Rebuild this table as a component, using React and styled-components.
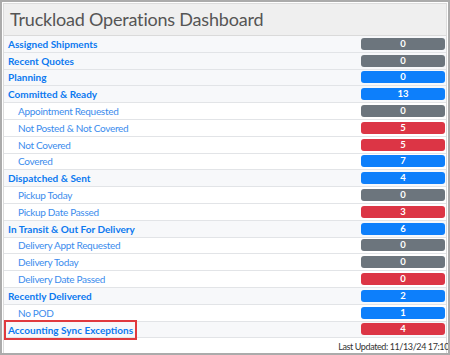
import React from "react";
import styled, { createGlobalStyle } from "styled-components";

const Global = createGlobalStyle`
  html, body { margin: 0; padding: 0; background: #fff; }
  body { font-family: Lato, "Open Sans", sans-serif; }
`;

const Frame = styled.div`
  width: 450px;
  height: 355px;
  box-sizing: border-box;
  border: 2px solid #ababab;
  background: #fff;
  display: flex;
  flex-direction: column;
  overflow: hidden;
`;

const Inner = styled.div`
  flex: 1;
  margin: 1px 1px 0 1px;
  border: 1px solid #dcdcdc;
  border-bottom: none;
  display: flex;
  flex-direction: column;
`;

const Header = styled.div`
  height: 32px;
  box-sizing: border-box;
  background: #efefef;
  border-bottom: 1px solid #dadada;
  display: flex;
  align-items: center;
  padding: 0 0 1px 6px;
  font-size: 18px;
  letter-spacing: -0.2px;
  color: #555;
`;

const List = styled.div`
  display: flex;
  flex-direction: column;
`;

const Row = styled.div`
  height: 16.8px;
  box-sizing: border-box;
  display: grid;
  grid-template-columns: 1fr 84px;
  align-items: center;
  padding: 0 1px 0 ${(p) => (p.$sub ? 14 : 4)}px;
  background: ${(p) => (p.$sub ? "#fff" : "#f7f8fa")};
  border-bottom: 1px solid #e2e4e7;
`;

const Label = styled.span`
  font-size: 10px;
  line-height: 14px;
  color: ${(p) => (p.$sub ? "#3b8ced" : "#0b79f0")};
  font-weight: ${(p) => (p.$sub ? 400 : 700)};
  letter-spacing: ${(p) => (p.$sub ? "-0.3px" : "0")};
  white-space: nowrap;
`;

const Highlight = styled.span`
  justify-self: start;
  border: 2px solid #e0393e;
  margin: -2px 0 -4px -4px;
  padding: 1px 2px 1px 2px;
  line-height: 12px;
`;

const colors = { grey: "#6c757d", blue: "#0d7ffb", red: "#dc3545" };

const Badge = styled.span`
  height: 12px;
  border-radius: 3px;
  background: ${(p) => colors[p.$tone]};
  color: #fff;
  font-size: 9.5px;
  font-weight: 700;
  line-height: 12px;
  text-align: center;
`;

const Footer = styled.div`
  text-align: right;
  font-size: 9px;
  letter-spacing: -0.4px;
  color: #333;
  padding: 3px 0 0 0;
  margin-right: -3px;
  white-space: nowrap;
`;

const rows = [
  ["Assigned Shipments", 0, "grey", false],
  ["Recent Quotes", 0, "grey", false],
  ["Planning", 0, "blue", false],
  ["Committed & Ready", 13, "blue", false],
  ["Appointment Requested", 0, "grey", true],
  ["Not Posted & Not Covered", 5, "red", true],
  ["Not Covered", 5, "red", true],
  ["Covered", 7, "blue", true],
  ["Dispatched & Sent", 4, "blue", false],
  ["Pickup Today", 0, "grey", true],
  ["Pickup Date Passed", 3, "red", true],
  ["In Transit & Out For Delivery", 6, "blue", false],
  ["Delivery Appt Requested", 0, "grey", true],
  ["Delivery Today", 0, "grey", true],
  ["Delivery Date Passed", 0, "red", true],
  ["Recently Delivered", 2, "blue", false],
  ["No POD", 1, "blue", true],
  ["Accounting Sync Exceptions", 4, "red", false, true],
];

export default function App() {
  return (
    <>
      <Global />
      <Frame>
        <Inner>
          <Header>Truckload Operations Dashboard</Header>
          <List>
            {rows.map(([label, n, tone, sub, hl]) => (
              <Row key={label} $sub={sub}>
                {hl ? (
                  <Label as={Highlight}>
                    <Label>{label}</Label>
                  </Label>
                ) : (
                  <Label $sub={sub}>{label}</Label>
                )}
                <Badge $tone={tone}>{n}</Badge>
              </Row>
            ))}
          </List>
          <Footer>Last Updated: 11/13/24 17:10</Footer>
        </Inner>
      </Frame>
    </>
  );
}
